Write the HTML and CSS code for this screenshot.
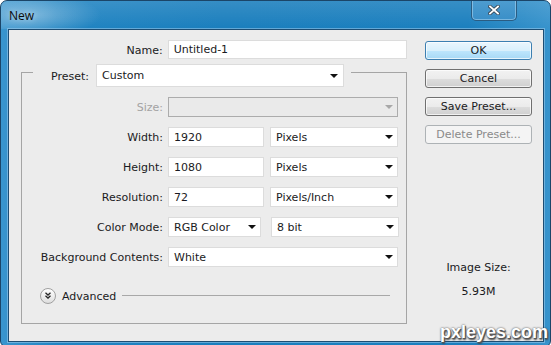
FILE: index.html
```html
<!DOCTYPE html>
<html lang="en">
<head>
  <meta charset="UTF-8">
  <title>New</title>
  <link rel="stylesheet" href="styles.css">
</head>
<body>
  <div class="window">
    <div class="titlebar">
      <span class="title">New</span>
      <div class="close-btn">
        <svg width="12" height="10" viewBox="0 0 12 10">
          <path d="M2 1.5 L10 8.5 M10 1.5 L2 8.5" stroke="#3a4a5a" stroke-width="3.6" stroke-linecap="square"/>
          <path d="M2 1.5 L10 8.5 M10 1.5 L2 8.5" stroke="#ffffff" stroke-width="1.8" stroke-linecap="square"/>
        </svg>
      </div>
    </div>

    <div class="client">
      <div class="main">
        <div class="row name-row">
          <span class="lbl wide">Name:</span>
          <div class="field name-field">Untitled-1</div>
        </div>

        <div class="group">
          <div class="legend">
            <span class="lbl">Preset:</span>
            <div class="select preset-select">Custom<span class="arrow"></span></div>
          </div>

          <div class="rows">
            <div class="row">
              <span class="lbl dim">Size:</span>
              <div class="select disabled full"><span class="arrow"></span></div>
            </div>
            <div class="row">
              <span class="lbl">Width:</span>
              <div class="field num">1920</div>
              <div class="select unit">Pixels<span class="arrow"></span></div>
            </div>
            <div class="row">
              <span class="lbl">Height:</span>
              <div class="field num">1080</div>
              <div class="select unit">Pixels<span class="arrow"></span></div>
            </div>
            <div class="row">
              <span class="lbl">Resolution:</span>
              <div class="field num">72</div>
              <div class="select unit">Pixels/Inch<span class="arrow"></span></div>
            </div>
            <div class="row">
              <span class="lbl">Color Mode:</span>
              <div class="select mode">RGB Color<span class="arrow"></span></div>
              <div class="select unit">8 bit<span class="arrow"></span></div>
            </div>
            <div class="row">
              <span class="lbl">Background Contents:</span>
              <div class="select full">White<span class="arrow"></span></div>
            </div>
          </div>

          <div class="advanced">
            <span class="adv-icon">
              <svg width="15" height="15" viewBox="0 0 15 15">
                <path d="M4.8 4.6 L7.5 7 L10.2 4.6 M4.8 7.8 L7.5 10.2 L10.2 7.8" fill="none" stroke="#2a2a2a" stroke-width="1.4"/>
              </svg>
            </span>
            <span class="adv-text">Advanced</span>
            <span class="adv-line"></span>
          </div>
        </div>
      </div>

      <div class="side">
        <div class="btn default">OK</div>
        <div class="btn">Cancel</div>
        <div class="btn">Save Preset...</div>
        <div class="btn off">Delete Preset...</div>

        <div class="size-info">
          <div>Image Size:</div>
          <div class="size-value">5.93M</div>
        </div>
      </div>
    </div>

    <div class="watermark">pxleyes.com</div>
  </div>
</body>
</html>
```

FILE: styles.css
```css
/* Global */
* {
    box-sizing: border-box;
}

body {
    margin: 0;
    background-color: #ffffff;
    font-family: "DejaVu Sans", sans-serif;
    font-size: 11px;
    color: #1a1a22;
}

/* Window frame */
.window {
    position: relative;
    width: 551px;
    height: 347px;
    border: 1px solid #1b4568;
    border-radius: 7px 7px 6px 6px;
    background: linear-gradient(to right, #3a95ce, #2084c2 10%, #1a7ebd 40%, #1b7fbe 85%, #3793cc);
    overflow: hidden;
}

.titlebar {
    height: 28px;
    display: flex;
    justify-content: space-between;
    align-items: flex-start;
    padding-left: 8px;
    background:
        radial-gradient(ellipse 70px 22px at 30px 14px, rgba(255, 255, 255, 0.35), rgba(255, 255, 255, 0)),
        linear-gradient(rgba(255, 255, 255, 0.12), rgba(255, 255, 255, 0));
}

.title {
    font-family: "Open Sans", sans-serif;
    font-size: 12px;
    line-height: 29px;
    color: #0a0a0a;
    text-shadow: 0 0 6px rgba(255, 255, 255, 0.6);
}

.close-btn {
    width: 46px;
    height: 21px;
    margin-top: -1px;
    margin-right: 33px;
    display: flex;
    align-items: center;
    justify-content: center;
    border: 1px solid #2a5c82;
    border-top: none;
    border-radius: 0 0 5px 5px;
    background: linear-gradient(#4e9dd0, #3a8fc8);
    box-shadow: inset 0 0 0 1px rgba(200, 230, 250, 0.45);
}

/* Client area */
.client {
    height: 313px;
    margin: 0 6px 0 7px;
    padding: 10px 0 0 12px;
    display: flex;
    background-color: #ececec;
    border: 1px solid #1d4d73;
    box-shadow: 0 0 0 1px rgba(170, 210, 240, 0.5);
}

.main {
    width: 386px;
}

.row {
    display: flex;
    align-items: center;
    gap: 5px;
    height: 20px;
}

.lbl {
    width: 141px;
    text-align: right;
    white-space: nowrap;
    padding-top: 1px;
}

.lbl.wide {
    width: 142px;
}

.lbl.dim {
    color: #a3a3a3;
}

.field,
.select {
    position: relative;
    height: 20px;
    line-height: 19px;
    padding-left: 5px;
    background-color: #ffffff;
    border: 1px solid #dcdcdc;
    white-space: nowrap;
}

.name-row {
    height: 19px;
}

.name-field {
    width: 240px;
    height: 19px;
    line-height: 18px;
}

.num {
    width: 96px;
}

.unit {
    width: 128px;
    margin-left: 1px;
}

.mode {
    width: 93px;
    margin-right: 4px;
}

.full {
    width: 230px;
}

.select.disabled {
    background-color: #eaeaea;
    border-color: #acacac;
}

.arrow {
    position: absolute;
    right: 4px;
    top: 7px;
    width: 0;
    height: 0;
    border-left: 4px solid transparent;
    border-right: 4px solid transparent;
    border-top: 4px solid #111111;
}

.disabled .arrow {
    border-top-color: #a8a8a8;
}

/* Preset group box */
.group {
    margin-top: 13px;
    border: 1px solid #a5a5a5;
    padding-bottom: 20px;
}

.legend {
    display: flex;
    align-items: center;
    gap: 7px;
    width: fit-content;
    margin: -9px 0 0 11px;
    padding: 0 7px 0 18px;
    background-color: #ececec;
}

.legend .lbl {
    width: auto;
}

.preset-select {
    width: 248px;
    height: 23px;
    line-height: 22px;
}

.preset-select .arrow {
    right: 5px;
    top: 9px;
}

.rows {
    display: flex;
    flex-direction: column;
    gap: 10px;
    margin-top: 10px;
}

.advanced {
    display: flex;
    align-items: center;
    height: 15px;
    margin-top: 21px;
    padding: 0 16px 0 18px;
}

.adv-icon {
    width: 16px;
    height: 16px;
    border: 1px solid #a0a0a0;
    border-radius: 50%;
    background: linear-gradient(#ffffff, #dedede);
    display: flex;
    align-items: center;
    justify-content: center;
}

.adv-text {
    margin: 1px 6px 0 6px;
}

.adv-line {
    flex: 1;
    height: 1px;
    background-color: #a8a8a8;
}

/* Buttons column */
.side {
    width: 107px;
    margin-left: 18px;
    padding-top: 1px;
    display: flex;
    flex-direction: column;
    gap: 9px;
}

.btn {
    height: 19px;
    line-height: 17px;
    text-align: center;
    border: 1px solid #707070;
    border-radius: 3px;
    background: linear-gradient(#f2f2f2 0%, #ebebeb 50%, #dddddd 51%, #cfcfcf 100%);
    box-shadow: inset 0 0 0 1px rgba(255, 255, 255, 0.7);
}

.btn.default {
    border-color: #3c7fb1;
    background: linear-gradient(#eaf6fd 0%, #d9f0fc 50%, #bee6fd 51%, #a7d9f5 100%);
}

.btn.off {
    color: #8a8a8a;
    border-color: #adb2b5;
    background: #f4f4f4;
    box-shadow: none;
}

.size-info {
    margin-top: 108px;
    text-align: center;
    line-height: 13px;
}

.size-value {
    margin-top: 11px;
}

/* Watermark overlay */
.watermark {
    position: absolute;
    right: 2px;
    bottom: 3px;
    font-family: "Liberation Sans", sans-serif;
    font-weight: bold;
    font-size: 18px;
    color: #ffffff;
    text-shadow: 1px 1px 0 #555, 0 0 2px #333, 1px 2px 2px #444;
}
```
